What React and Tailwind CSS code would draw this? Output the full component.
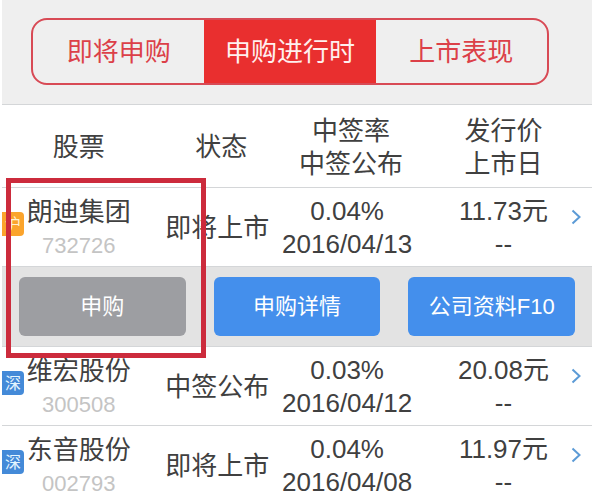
import React, { useState } from "react";

const tabs = ["即将申购", "申购进行时", "上市表现"];

const stocks = [
  {
    market: "沪",
    name: "朗迪集团",
    code: "732726",
    status: "即将上市",
    rate: "0.04%",
    date: "2016/04/13",
    price: "11.73元",
    listed: "--",
  },
  {
    market: "深",
    name: "维宏股份",
    code: "300508",
    status: "中签公布",
    rate: "0.03%",
    date: "2016/04/12",
    price: "20.08元",
    listed: "--",
  },
  {
    market: "深",
    name: "东音股份",
    code: "002793",
    status: "即将上市",
    rate: "0.04%",
    date: "2016/04/08",
    price: "11.97元",
    listed: "--",
  },
];

function Badge({ market }) {
  return (
    <span
      className={
        market === "沪"
          ? "mt-4 flex h-6 w-[22px] items-center justify-center rounded-r-sm bg-[#fba42c] text-[16px] text-[#fff0d0]"
          : "mt-4 flex h-6 w-[22px] items-center justify-center rounded-r-sm bg-[#448ad8] text-[16px] text-[#e4f6ff]"
      }
    >
      {market}
    </span>
  );
}

function StockRow({ stock, open, onToggle }) {
  return (
    <tr className="border-t border-[#d4d6d8]">
      <td className="relative p-0 pt-2 pb-1">
        <div className="grid grid-cols-[1fr_auto_1fr] items-start">
          <Badge market={stock.market} />
          <div>
            <div>{stock.name}</div>
            <div className="text-[22px] text-[#c4c4c4]">{stock.code}</div>
          </div>
        </div>
        {open && (
          <div className="pointer-events-none absolute -top-[10px] left-1 z-10 h-[180px] w-[200px] border-5 border-[#cc2b3c]"></div>
        )}
      </td>
      <td className="p-0 pt-[2px]">{stock.status}</td>
      <td className="p-0 pt-[2px]">
        <div>{stock.rate}</div>
        <div>{stock.date}</div>
      </td>
      <td className="p-0 pt-[2px]">
        <div className="grid grid-cols-[1fr_auto_1fr]">
          <div className="col-start-2">
            <div>{stock.price}</div>
            <div>{stock.listed}</div>
          </div>
          <button
            type="button"
            aria-label={stock.name}
            aria-expanded={open}
            onClick={onToggle}
            className="mt-[14px] mr-2 self-start justify-self-end"
          >
            <svg
              width="16"
              height="16"
              viewBox="0 0 16 16"
              fill="none"
              stroke="#5c9bd6"
              strokeWidth="2"
            >
              <path d="M4.5 1.5 L11.5 8 L4.5 14.5" />
            </svg>
          </button>
        </div>
      </td>
    </tr>
  );
}

function ActionRow() {
  return (
    <tr className="border-t border-[#d4d6d8] bg-[#e3e3e3]">
      <td colSpan={4} className="p-0">
        <div className="grid grid-cols-3 gap-7 px-[17px] py-[10px] text-[22px] text-white">
          <button type="button" className="h-[59px] rounded-md bg-[#9d9ea2]">
            申购
          </button>
          <button type="button" className="h-[59px] rounded-md bg-[#448fec]">
            申购详情
          </button>
          <button type="button" className="h-[59px] rounded-md bg-[#448fec]">
            公司资料F10
          </button>
        </div>
      </td>
    </tr>
  );
}

function App() {
  const [active, setActive] = useState(1);
  const [opened, setOpened] = useState("732726");

  return (
    <div className="h-screen overflow-hidden bg-white px-[2px] font-['Liberation_Sans','Noto_Sans_CJK_SC',sans-serif] text-[26px] leading-[33px] text-[#404040]">
      <header className="bg-[#efefef] pt-[18px] pr-[43px] pb-[19px] pl-[29px]">
        <div className="grid h-[67px] grid-cols-3 overflow-hidden rounded-2xl border-2 border-[#d84a55]">
          {tabs.map((tab, i) => (
            <button
              key={tab}
              type="button"
              onClick={() => setActive(i)}
              className={
                i === active
                  ? "bg-[#e92f2f] pt-[2px] text-[#fff0ee]"
                  : "pt-[2px] text-[#dc4048]"
              }
            >
              {tab}
            </button>
          ))}
        </div>
      </header>

      <table className="w-full table-fixed border-collapse text-center">
        <colgroup>
          <col className="w-[26%]" />
          <col className="w-[21%]" />
          <col className="w-[23%]" />
          <col className="w-[30%]" />
        </colgroup>
        <thead>
          <tr className="border-t border-[#d4d6d8]">
            <th className="p-0 pt-[2px] font-normal">股票</th>
            <th className="p-0 pt-[2px] pl-2 font-normal">状态</th>
            <th className="p-0 pt-[10px] pb-[6px] pl-2 font-normal">
              <div>中签率</div>
              <div>中签公布</div>
            </th>
            <th className="p-0 pt-[10px] pb-[6px] font-normal">
              <div>发行价</div>
              <div>上市日</div>
            </th>
          </tr>
        </thead>
        <tbody>
          {stocks.map((stock) => (
            <React.Fragment key={stock.code}>
              <StockRow
                stock={stock}
                open={opened === stock.code}
                onToggle={() =>
                  setOpened(opened === stock.code ? null : stock.code)
                }
              />
              {opened === stock.code && <ActionRow />}
            </React.Fragment>
          ))}
        </tbody>
      </table>
    </div>
  );
}

export default App;
